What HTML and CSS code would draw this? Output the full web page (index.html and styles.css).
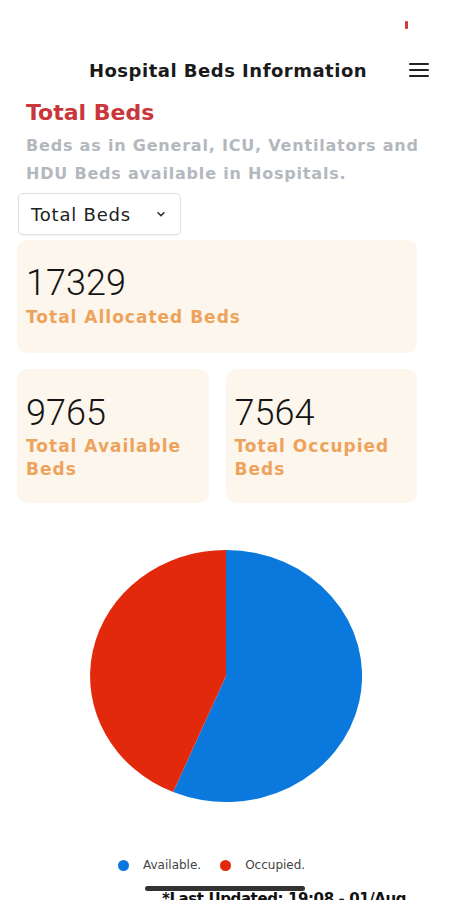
FILE: index.html
```html
<!DOCTYPE html>
<html lang="en">
<head>
  <meta charset="UTF-8" />
  <meta name="viewport" content="width=device-width, initial-scale=1.0" />
  <title>Hospital Beds Information</title>
  <link rel="stylesheet" href="styles.css">
</head>
<body>
  <div class="status-bar"><span class="status-dot"></span></div>

  <header class="top-bar">
    <span></span>
    <h1 class="top-title">Hospital Beds Information</h1>
    <button class="menu-btn" aria-label="Menu">
      <svg width="20" height="16" viewBox="0 0 20 16">
        <path d="M1 2h18M1 8h18M1 14h18" stroke="#222" stroke-width="2" stroke-linecap="round"/>
      </svg>
    </button>
  </header>

  <main class="content">
    <h2 class="section-title">Total Beds</h2>
    <p class="section-desc">Beds as in General, ICU, Ventilators and HDU Beds available in Hospitals.</p>

    <div class="bed-select">
      <span>Total Beds</span>
      <svg width="10" height="6" viewBox="0 0 10 6">
        <path d="M1.5 1.2L5 4.6l3.5-3.4" fill="none" stroke="#333" stroke-width="1.5"/>
      </svg>
    </div>

    <!-- Bed counts -->
    <div class="card card-wide">
      <div class="card-num">17329</div>
      <div class="card-label">Total Allocated Beds</div>
    </div>

    <div class="card-row">
      <div class="card">
        <div class="card-num">9765</div>
        <div class="card-label">Total Available Beds</div>
      </div>
      <div class="card">
        <div class="card-num">7564</div>
        <div class="card-label">Total Occupied Beds</div>
      </div>
    </div>

    <!-- Pie chart: available 9765 / occupied 7564 -->
    <div class="chart">
      <svg width="272" height="252" viewBox="-1 -1 2 2" preserveAspectRatio="none">
        <path d="M0 0L0 -1A1 1 0 1 1 -0.389 0.921Z" fill="#0a78dc"/>
        <path d="M0 0L-0.389 0.921A1 1 0 0 1 0 -1Z" fill="#e3290b"/>
      </svg>
    </div>

    <div class="legend">
      <span class="legend-item"><i class="dot dot-blue"></i>Available.</span>
      <span class="legend-item"><i class="dot dot-red"></i>Occupied.</span>
    </div>

    <p class="updated">*Last Updated: 19:08 - 01/Aug</p>
  </main>

  <div class="home-bar"></div>
</body>
</html>
```

FILE: styles.css
```css
:root {
  --red: #c9373b;
  --grey: #b3b8be;
  --card-bg: #fdf6ec;
  --orange: #eda35c;
  --text: #141414;
}
html, body {
  margin: 0;
  padding: 0;
}
body {
  width: 450px;
  height: 900px;
  overflow: hidden;
  position: relative;
  background: #fff;
  color: var(--text);
  font-family: "DejaVu Sans", Verdana, sans-serif;
}
.status-bar {
  height: 45px;
  position: relative;
}
.status-dot {
  position: absolute;
  left: 405px;
  top: 21px;
  width: 3px;
  height: 8px;
  border-radius: 1px;
  background: #d33a3a;
}
.top-bar {
  height: 50px;
  display: grid;
  grid-template-columns: 1fr auto 1fr;
  align-items: center;
}
.top-title {
  margin: 0 0 0 6px;
  font-size: 18px;
  font-weight: 600;
  letter-spacing: 0.5px;
  color: #1a1a1a;
}
.menu-btn {
  justify-self: end;
  margin-right: 21px;
  padding: 0;
  border: none;
  background: none;
  display: flex;
}
.content {
  padding: 5px 33px 0 17px;
}
.section-title {
  margin: 0 0 6px 9px;
  font-size: 22px;
  line-height: 26px;
  font-weight: bold;
  color: var(--red);
}
.section-desc {
  margin: 0 0 5px 9px;
  font-size: 16px;
  line-height: 28px;
  font-weight: bold;
  letter-spacing: 0.8px;
  color: var(--grey);
  width: 408px;
}
.bed-select {
  width: 163px;
  height: 42px;
  box-sizing: border-box;
  margin-left: 1px;
  padding: 0 14px 0 12px;
  display: flex;
  align-items: center;
  justify-content: space-between;
  border: 1px solid #e0e0e0;
  border-radius: 5px;
  box-shadow: 0 1px 2px rgba(0, 0, 0, 0.06);
  font-size: 18px;
  letter-spacing: 0.8px;
  color: #222;
}
.card {
  background: var(--card-bg);
  border-radius: 10px;
  padding: 23px 9px 22px;
}
.card-wide {
  margin-top: 5px;
  padding: 22px 9px 24px;
}
.card-row {
  margin-top: 16px;
  display: grid;
  grid-template-columns: 1fr 1fr;
  gap: 17px;
}
.card-num {
  font-family: Roboto, "Liberation Sans", sans-serif;
  font-weight: 300;
  font-size: 36px;
  line-height: 43px;
  color: var(--text);
}
.card-label {
  font-size: 17px;
  line-height: 23px;
  font-weight: bold;
  letter-spacing: 1px;
  color: var(--orange);
}
.card-wide .card-label {
  line-height: 24px;
}
.chart {
  margin-top: 47px;
  display: flex;
  justify-content: center;
  padding-left: 18px;
}
.chart svg {
  display: block;
}
.legend {
  margin-top: 55px;
  display: flex;
  gap: 19px;
  padding-left: 101px;
  font-size: 12px;
  line-height: 16px;
  color: #444;
}
.legend-item {
  display: flex;
  align-items: center;
  gap: 14px;
}
.dot {
  width: 11px;
  height: 11px;
  border-radius: 50%;
}
.dot-blue { background: #0a78dc; }
.dot-red { background: #e3290b; }
.updated {
  margin: 17px 0 0 145px;
  font-size: 15px;
  font-weight: bold;
  letter-spacing: -0.4px;
  white-space: nowrap;
  color: #111;
}
.home-bar {
  position: absolute;
  left: 145px;
  top: 886px;
  width: 160px;
  height: 5px;
  border-radius: 3px;
  background: #333;
}
```
